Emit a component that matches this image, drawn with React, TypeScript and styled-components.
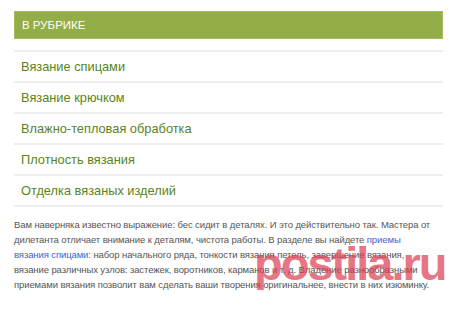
import styled, { createGlobalStyle } from "styled-components";

const categories = [
  "Вязание спицами",
  "Вязание крючком",
  "Влажно-тепловая обработка",
  "Плотность вязания",
  "Отделка вязаных изделий",
];

const App = () => {
  return (
    <>
      <GlobalStyle />
      <Page>
        <Header>В рубрике</Header>
        <List>
          {categories.map((name) => (
            <Item key={name}>
              <ItemLink href="#">{name}</ItemLink>
            </Item>
          ))}
        </List>
        <Description>
          Вам наверняка известно выражение: бес сидит в деталях. И это
          действительно так. Мастера от дилетанта отличает внимание к деталям,
          чистота работы. В разделе вы найдете{" "}
          <TextLink href="#">приемы вязания спицами</TextLink>: набор
          начального ряда, тонкости вязания петель, завершение вязания, вязание
          различных узлов: застежек, воротников, карманов и т. д. Владение
          разнообразными приемами вязания позволит вам сделать ваши творения
          оригинальнее, внести в них изюминку.
        </Description>
        <Watermark>postila.ru</Watermark>
      </Page>
    </>
  );
};

export default App;

// STYLED COMPONENTS

const GlobalStyle = createGlobalStyle`
  html, body {
    margin: 0;
    padding: 0;
    background: #fff;
  }
`;

const Page = styled.div`
  position: relative;
  width: 429px;
  padding: 11px 0 0 14px;
  font-family: "Liberation Sans", Arial, sans-serif;
`;

const Header = styled.div`
  height: 26px;
  display: flex;
  align-items: center;
  padding-left: 7px;
  background: #93ad47;
  border: 1px solid #a3bb5e;
  color: #fff;
  font-size: 11.5px;
  text-transform: uppercase;
`;

const List = styled.ul`
  list-style: none;
  margin: 11px 0 0;
  padding: 0;
  border-top: 2px solid #eeeeee;
`;

const Item = styled.li`
  height: 29px;
  display: flex;
  align-items: center;
  padding-left: 7px;
  border-bottom: 2px solid #eeeeee;
`;

const ItemLink = styled.a`
  color: #5a8419;
  font-size: 12.8px;
  text-decoration: none;
`;

const Description = styled.p`
  margin: 10px 0 0;
  padding-right: 10px;
  color: #555;
  font-size: 9.5px;
  letter-spacing: -0.1px;
  line-height: 15px;
`;

const TextLink = styled.a`
  color: #3d62d6;
  text-decoration: none;
`;

const Watermark = styled.div`
  position: absolute;
  left: 254px;
  top: 236px;
  color: #dc3d52;
  opacity: 0.7;
  font-size: 47px;
  font-weight: bold;
  letter-spacing: -2px;
  pointer-events: none;
`;
